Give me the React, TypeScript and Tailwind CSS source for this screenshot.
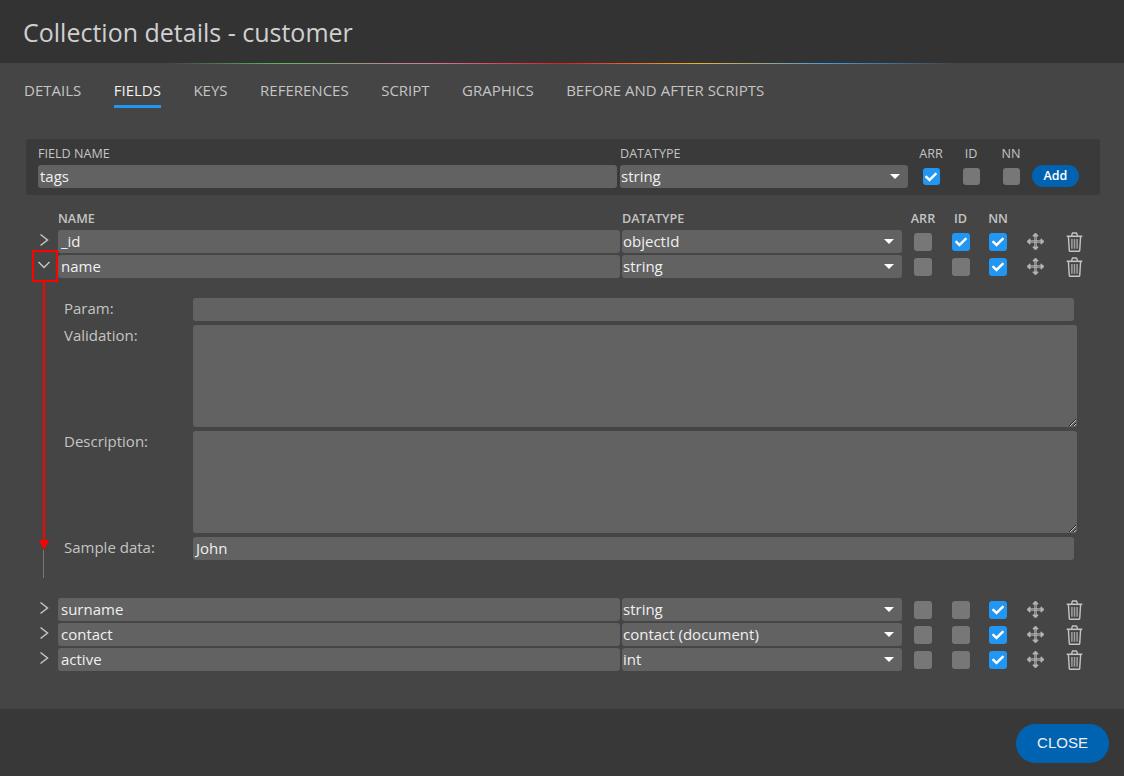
import { FaCheck } from 'react-icons/fa'

const tabs = ['Details', 'Fields', 'Keys', 'References', 'Script', 'Graphics', 'Before and after scripts']

const rowsTop = [
  { name: '_id', type: 'objectId', arr: false, id: true, nn: true },
  { name: 'name', type: 'string', arr: false, id: false, nn: true },
]

const rowsBottom = [
  { name: 'surname', type: 'string', arr: false, id: false, nn: true },
  { name: 'contact', type: 'contact (document)', arr: false, id: false, nn: true },
  { name: 'active', type: 'int', arr: false, id: false, nn: true },
]

function Box({ on, small }: { on: boolean; small?: boolean }) {
  return (
    <div
      className={`flex items-center justify-center rounded-[3px] ${small ? 'w-[17px] h-[17px]' : 'w-[18px] h-[18px]'} ${on ? 'bg-[#2196f3]' : 'bg-[#777777]'}`}
    >
      {on && <FaCheck className="w-[12px] h-[12px] text-white" />}
    </div>
  )
}

function Select({ value, className }: { value: string; className: string }) {
  return (
    <div className={`flex items-center justify-between h-[23px] rounded-[3px] bg-[#626262] pl-[1px] pr-[8px] text-[15px] text-[#f0f0f0] ${className}`}>
      <span>{value}</span>
      <div className="w-0 h-0 border-x-[5px] border-x-transparent border-t-[5px] border-t-white" />
    </div>
  )
}

function Chevron({ open }: { open?: boolean }) {
  if (open) {
    return (
      <svg width="14" height="10" viewBox="0 0 14 10" fill="none" stroke="#c4c4c4" strokeWidth="1.5" className="-mt-[3px]">
        <path d="M1.5 2 L7 7.5 L12.5 2" />
      </svg>
    )
  }
  return (
    <svg width="10" height="14" viewBox="0 0 10 14" fill="none" stroke="#c4c4c4" strokeWidth="1.5" className="-mt-[3px]">
      <path d="M1.5 1.5 L8.5 7 L1.5 12.5" />
    </svg>
  )
}

function MoveIcon() {
  return (
    <svg width="19" height="19" viewBox="0 0 19 19" fill="none" stroke="#b4b4b4" strokeWidth="1" strokeLinejoin="round">
      <path d="M3 8.8 H16 M3 10.2 H16 M8.8 3 V16 M10.2 3 V16" />
      <path d="M4 6.8 L1 9.5 L4 12.2 Z M15 6.8 L18 9.5 L15 12.2 Z M6.8 4 L9.5 1 L12.2 4 Z M6.8 15 L9.5 18 L12.2 15 Z" fill="#b4b4b4" />
    </svg>
  )
}

function TrashIcon() {
  return (
    <svg width="17" height="20" viewBox="0 0 17 20" fill="none" stroke="#c4c4c4" strokeWidth="1.4" strokeLinejoin="round">
      <path d="M0.7 4.3 H16.3" strokeWidth="1.6" />
      <path d="M5.5 3.8 L6.5 1 H10.5 L11.5 3.8" />
      <path d="M2.4 4.5 L3.3 18.6 Q3.4 19.3 4.1 19.3 H12.9 Q13.6 19.3 13.7 18.6 L14.6 4.5" />
      <path d="M5.9 7 V16.8 M8.5 7 V16.8 M11.1 7 V16.8" stroke="#a0a0a0" strokeWidth="1.5" />
    </svg>
  )
}

function Row({ row, open }: { row: (typeof rowsTop)[number]; open?: boolean }) {
  return (
    <div className="flex items-center h-[23px] mb-[2px]">
      <div className="w-[32px] pl-[4px] flex justify-center">
        <Chevron open={open} />
      </div>
      <div className="w-[562px] h-[23px] flex items-center rounded-[3px] bg-[#626262] pl-[3px] text-[15px] text-[#f0f0f0]">{row.name}</div>
      <Select value={row.type} className="w-[280px] ml-[2px]" />
      <div className="ml-[12px] w-[38px] mt-[1px]"><Box on={row.arr} /></div>
      <div className="w-[37px] mt-[1px]"><Box on={row.id} /></div>
      <div className="w-[37px] mt-[1px]"><Box on={row.nn} /></div>
      <MoveIcon />
      <div className="ml-[21px]"><TrashIcon /></div>
    </div>
  )
}

export default function App() {
  return (
    <div className="relative w-[1124px] h-[776px] flex flex-col overflow-hidden bg-[#454545] font-['Open_Sans',sans-serif] text-[#c4c4c4]">
      {/* Header */}
      <div className="h-[63px] shrink-0 bg-[#333333] pl-[23px] pt-[13px] text-[25px] leading-[38px] text-[#d0d0d0]">
        Collection details - customer
      </div>
      <div className="h-px shrink-0 bg-[linear-gradient(to_right,transparent_15%,#5cb85c_25%,#d9779f_38%,#e01e1e_50%,#eeb032_62%,#3c9ce8_74%,transparent_85%)]" />

      {/* Tabs */}
      <div className="flex gap-[32.5px] pl-[24px] pt-[15px] h-[75px] shrink-0 text-[15px] uppercase">
        {tabs.map((t) => (
          <div key={t} className={`h-[29px] leading-[23px] ${t === 'Fields' ? 'border-b-[3px] border-[#2196f3] text-[#f0f0f0]' : ''}`}>
            {t}
          </div>
        ))}
      </div>

      <div className="flex-1 pl-[26px]">
        {/* Add field */}
        <div className="flex w-[1074px] h-[56px] rounded-[3px] bg-[#3a3a3a] pl-[12px] pt-[6px]">
          <div className="w-[582px]">
            <div className="text-[12.6px] leading-[18px]">FIELD NAME</div>
            <div className="w-[579px] h-[23px] mt-[2px] flex items-center rounded-[3px] bg-[#626262] pl-[2px] text-[15px] text-[#f0f0f0]">tags</div>
          </div>
          <div className="w-[288px]">
            <div className="text-[12.6px] leading-[18px]">DATATYPE</div>
            <Select value="string" className="w-[288px] mt-[2px]" />
          </div>
          <div className="ml-[11px] flex flex-col items-center w-[24px]">
            <div className="text-[12.6px] leading-[18px]">ARR</div>
            <div className="mt-[5px]"><Box on small /></div>
          </div>
          <div className="ml-[16px] flex flex-col items-center w-[24px]">
            <div className="text-[12.6px] leading-[18px]">ID</div>
            <div className="mt-[5px]"><Box on={false} small /></div>
          </div>
          <div className="ml-[16px] flex flex-col items-center w-[24px]">
            <div className="text-[12.6px] leading-[18px]">NN</div>
            <div className="mt-[5px]"><Box on={false} small /></div>
          </div>
          <div className="ml-[9px] mt-[20px] w-[47px] h-[22px] rounded-full bg-[#0063b1] flex items-center justify-center text-[12.5px] font-semibold text-white">Add</div>
        </div>

        {/* Field list */}
        <div className="ml-[6px] mt-[14px] pt-px flex h-[21px] text-[12.6px] font-semibold leading-[18px]">
          <div className="ml-[26px] w-[564px]">NAME</div>
          <div className="w-[283px]">DATATYPE</div>
          <div className="w-[38px] text-center -ml-[1px]">ARR</div>
          <div className="w-[37px] text-center">ID</div>
          <div className="w-[38px] text-center">NN</div>
        </div>
        {rowsTop.map((r, i) => <Row key={r.name} row={r} open={i === 1} />)}

        {/* Expanded field */}
        <div className="ml-[38px] mt-[20px] w-[1013px] text-[15px]">
          <div className="flex h-[27px]">
            <div className="w-[129px] leading-[20px]">Param:</div>
            <div className="w-[881px] h-[23px] rounded-[3px] bg-[#626262]" />
          </div>
          <div className="flex h-[106px]">
            <div className="w-[129px] leading-[20px]">Validation:</div>
            <textarea readOnly className="w-[884px] h-[102px] rounded-[3px] bg-[#626262] outline-none" />
          </div>
          <div className="flex h-[106px]">
            <div className="w-[129px] leading-[20px]">Description:</div>
            <textarea readOnly className="w-[884px] h-[102px] rounded-[3px] bg-[#626262] outline-none" />
          </div>
          <div className="flex h-[23px]">
            <div className="w-[129px] leading-[20px]">Sample data:</div>
            <div className="w-[881px] h-[23px] flex items-center rounded-[3px] bg-[#626262] pl-[3px] text-[15px] text-[#f0f0f0]">John</div>
          </div>
        </div>

        <div className="mt-[38px]">
          {rowsBottom.map((r) => <Row key={r.name} row={r} />)}
        </div>
      </div>

      {/* Footer */}
      <div className="h-[67px] shrink-0 bg-[#383838] flex justify-end items-start pt-[15px] pr-[15px]">
        <div className="w-[93px] h-[39px] rounded-full bg-[#0063b1] flex items-center justify-center font-['Liberation_Sans',sans-serif] text-[15px] text-[#f0f0f0]">CLOSE</div>
      </div>

      {/* Red annotation over the row */}
      <div className="absolute left-[32px] top-[250px] w-[26px] h-[32px] border-2 border-[#ff0000]" />
      <div className="absolute left-[43px] top-[282px] w-[2px] h-[260px] bg-[#ff0000]" />
      <div className="absolute left-[39px] top-[540px] w-0 h-0 border-x-[5px] border-x-transparent border-t-[10px] border-t-[#ff0000]" />
      <div className="absolute left-[43px] top-[550px] w-px h-[28px] bg-[#777777]" />
    </div>
  )
}
